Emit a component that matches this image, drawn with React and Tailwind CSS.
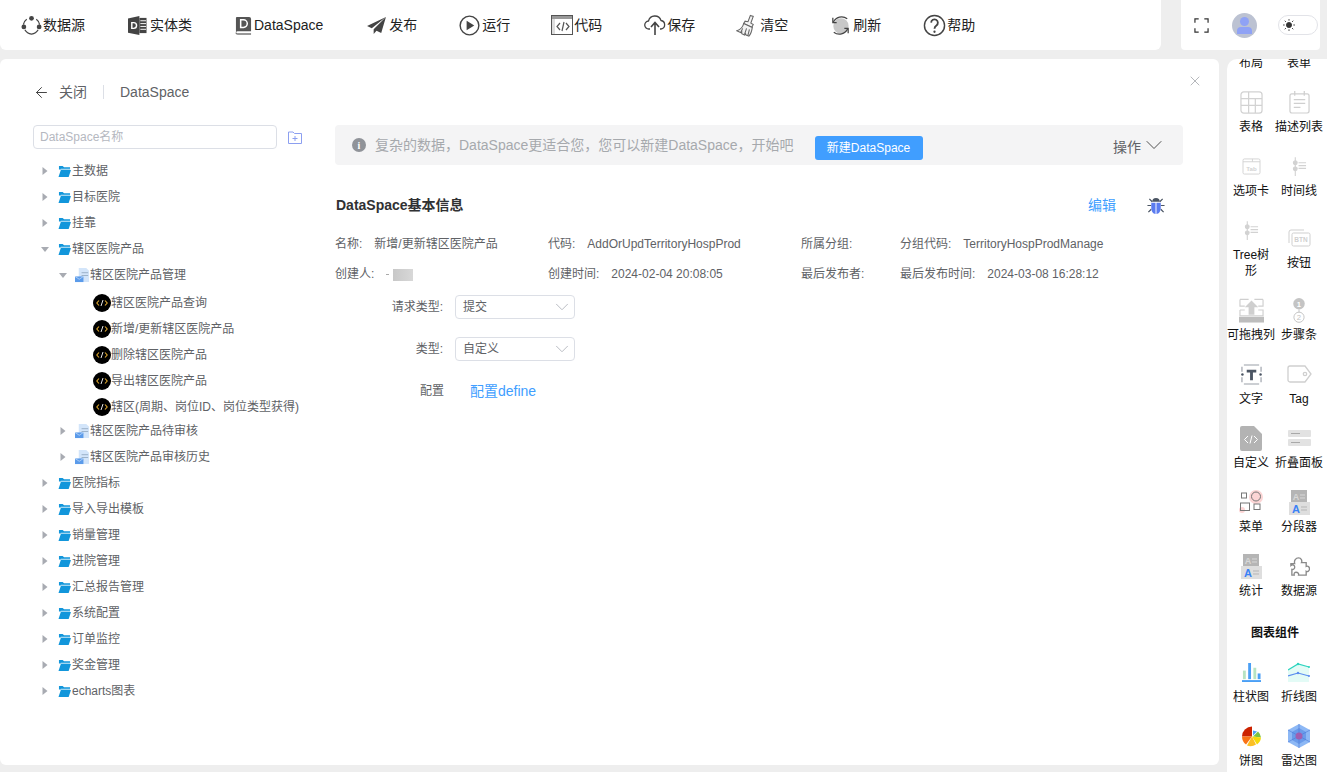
import React from "react";
import { ArrowLeft, X, ChevronDown } from "lucide-react";

const IconSource = () => (
  <svg viewBox="0 0 22 22" className="w-[21px] h-[21px]" fill="none">
    <path d="M6 4.500A8.500 8.500 0 0 0 2.500 10M16 4.500A8.500 8.500 0 0 1 19.500 10M4 15.500A9 9 0 0 0 11 20a9 9 0 0 0 7-4.500" stroke="#444" strokeWidth="1.300" />
    <circle cx="11" cy="3.500" r="2.500" fill="#444" />
    <circle cx="3" cy="12.500" r="2.500" fill="#444" />
    <circle cx="19" cy="12.500" r="2.500" fill="#444" />
  </svg>
);

const IconEntity = () => (
  <svg viewBox="0 0 20 20" className="w-[19px] h-[19px]">
    <path d="M0 2.500 12 0v20L0 17.500z" fill="#444" />
    <path d="M12 2h7.500v16H12z" fill="#444" />
    <path d="M13 5h6M13 8h6M13 11h6M13 14h6" stroke="#fff" strokeWidth="1" />
    <path d="M4 7h2a3 3 0 0 1 0 6H4z" fill="none" stroke="#fff" strokeWidth="1.500" />
  </svg>
);

const IconDataSpace = () => (
  <svg viewBox="0 0 18 20" className="w-[17px] h-[19px]" fill="none">
    <path d="M2 1h13a2 2 0 0 1 2 2v13H3a2 2 0 0 0-2 1.500V2a1 1 0 0 1 1-1z" fill="#555" />
    <path d="M1 17.500A2 2 0 0 0 3 19h14" stroke="#777" strokeWidth="1.500" />
    <path d="M6 4h3a4 4 0 0 1 0 8H6z" stroke="#fff" strokeWidth="1.600" />
  </svg>
);

const IconSend = () => (
  <svg viewBox="0 0 20 18" className="w-[19px] h-[17px]">
    <path d="M20 0 0 9.500l5 2.500zM20 0 7 13v5l3-3.500 5 2.500z" fill="#444" />
  </svg>
);

const IconRun = () => (
  <svg viewBox="0 0 22 22" className="w-[21px] h-[21px]" fill="none">
    <circle cx="11" cy="11" r="9.800" stroke="#444" strokeWidth="1.500" />
    <path d="M8 6l8 5-8 5z" fill="#444" />
  </svg>
);

const IconCode = () => (
  <svg viewBox="0 0 22 20" className="w-[22px] h-[20px]" fill="none">
    <rect x="0.500" y="0.500" width="21" height="19" stroke="#555" fill="#fff" />
    <path d="M1 1h20v3H1z" fill="#999" />
    <path d="M1 4h3v15H1z" fill="#ddd" />
    <path d="M9 8l-3 3.500 3 3.500M15 8l3 3.500-3 3.500M13 7l-2 9" stroke="#555" strokeWidth="1.200" />
  </svg>
);

const IconSave = () => (
  <svg viewBox="0 0 22 22" className="w-[22px] h-[22px]" fill="none" stroke="#444" strokeWidth="1.300">
    <path d="M6 15H5a4 4 0 0 1-.5-8A6.500 6.500 0 0 1 17 6.500a4.300 4.300 0 0 1 0 8.500h-1" />
    <path d="M11 21V9M7 13l4-4.500 4 4.500" strokeWidth="1.600" />
  </svg>
);

const IconBroom = () => (
  <svg viewBox="0 0 24 24" className="w-[23px] h-[23px]" fill="#f3f3f3" stroke="#666" strokeWidth="1.100">
    <path d="M15 1.500l3 1-2.500 7 2.500 1.500-1.500 3L8 10l1.500-2.500 3 .5z" />
    <path d="M8 10c-1 4-3 6-7 7.500l4 2 1-1 0 2 3 1.500 1-1.500.5 1.500 3 1c2-2 3-5 3.500-9z" />
    <path d="M7 15l-2 4M11 15l-2 6M14 16l-1.500 6" />
  </svg>
);

const IconRefresh = () => (
  <svg viewBox="0 0 24 24" className="w-[23px] h-[23px]" fill="none" stroke="#444" strokeWidth="1.300">
    <circle cx="12.500" cy="12.500" r="8" fill="#c8c8c8" stroke="none" />
    <path d="M4 4v5h4M20 20v-5h-4" />
    <path d="M4.500 8.500A9.500 9.500 0 0 1 19 5M19.500 15.500A9.500 9.500 0 0 1 5 19" />
  </svg>
);

const IconHelp = () => (
  <svg viewBox="0 0 24 24" className="w-[23px] h-[23px]" fill="none" stroke="#444" strokeWidth="1.500">
    <circle cx="12" cy="12" r="10.500" />
    <path d="M8.500 9a3.500 3.500 0 1 1 5.500 3c-1.500 1-2 1.500-2 3.500" strokeWidth="1.900" />
    <circle cx="12" cy="18.500" r="1.200" fill="#444" stroke="none" />
  </svg>
);

const FolderIcon = () => (
  <svg viewBox="0 0 14 13" className="w-[13px] h-[12px] shrink-0">
    <path d="M1 1h4l1.500 1.500H13V5H1z" fill="#1296db" />
    <path d="M3 5.500h11L11.500 13H0.500z" fill="#1296db" />
    <path d="M3 4.500h10" stroke="#bfe4f8" strokeWidth="0.800" />
  </svg>
);

const DocIcon = () => (
  <svg viewBox="0 0 16 16" className="w-[15px] h-[15px] shrink-0">
    <path d="M4 0h8l3 3v12H4z" fill="#d3e5fa" />
    <path d="M7 5h7M7 8h7" stroke="#8aa0b8" strokeWidth="0.800" />
    <rect x="0" y="9" width="9" height="6" fill="#5b9bea" />
    <path d="M0 9l4.500 3L9 9" stroke="#d3e5fa" strokeWidth="0.700" fill="none" />
  </svg>
);

const CodeIcon = () => (
  <svg viewBox="0 0 18 18" className="w-[18px] h-[18px] shrink-0" fill="none">
    <circle cx="9" cy="9" r="9" fill="#000" />
    <path d="M6 6.500 3.800 9 6 11.500M12 6.500 14.200 9 12 11.500" stroke="#e0a92e" strokeWidth="1.100" />
    <path d="M10 6 8 12" stroke="#fff" strokeWidth="0.900" />
  </svg>
);

const Caret = ({ open }) => (
  <svg viewBox="0 0 8 8" className="w-[8px] h-[8px] shrink-0">
    {open ? <path d="M0 2h8L4 7z" fill="#a8abb2" /> : <path d="M1.500 0v8L6.500 4z" fill="#a8abb2" />}
  </svg>
);

const toolbarItems = [
  { label: "数据源", w: "w-[23px]", icon: <IconSource /> },
  { label: "实体类", w: "w-[25px]", icon: <IconEntity /> },
  { label: "DataSpace", w: "w-[22px]", icon: <IconDataSpace /> },
  { label: "发布", w: "w-[26px]", icon: <IconSend /> },
  { label: "运行", w: "w-[25px]", icon: <IconRun /> },
  { label: "代码", w: "w-[24px]", icon: <IconCode /> },
  { label: "保存", w: "w-[25px]", icon: <IconSave /> },
  { label: "清空", w: "w-[25px]", icon: <IconBroom /> },
  { label: "刷新", w: "w-[25px]", icon: <IconRefresh /> },
  { label: "帮助", w: "w-[26px]", icon: <IconHelp /> },
];

const treeRows = [
  { level: 0, label: "主数据" },
  { level: 0, label: "目标医院" },
  { level: 0, label: "挂靠" },
  { level: 0, label: "辖区医院产品", open: true },
  { level: 1, label: "辖区医院产品管理", open: true },
  { level: 2, label: "辖区医院产品查询" },
  { level: 2, label: "新增/更新辖区医院产品" },
  { level: 2, label: "删除辖区医院产品" },
  { level: 2, label: "导出辖区医院产品" },
  { level: 2, label: "辖区(周期、岗位ID、岗位类型获得)" },
  { level: 1, label: "辖区医院产品待审核" },
  { level: 1, label: "辖区医院产品审核历史" },
  { level: 0, label: "医院指标" },
  { level: 0, label: "导入导出模板" },
  { level: 0, label: "销量管理" },
  { level: 0, label: "进院管理" },
  { level: 0, label: "汇总报告管理" },
  { level: 0, label: "系统配置" },
  { level: 0, label: "订单监控" },
  { level: 0, label: "奖金管理" },
  { level: 0, label: "echarts图表" },
];

const TreeRow = ({ row }) => {
  if (row.level === 2) {
    return (
      <div className="flex items-center h-[26px] pl-[93px] pt-[4px]">
        <CodeIcon />
        <span className="whitespace-nowrap">{row.label}</span>
      </div>
    );
  }
  if (row.level === 1) {
    return (
      <div className="flex items-center h-[26px] pl-[59px]">
        <Caret open={row.open} />
        <span className="ml-[8px]"><DocIcon /></span>
        <span className="whitespace-nowrap">{row.label}</span>
      </div>
    );
  }
  return (
    <div className="flex items-center h-[26px] pl-[41px]">
      <Caret open={row.open} />
      <span className="ml-[9px] mr-px"><FolderIcon /></span>
      <span className="whitespace-nowrap">{row.label}</span>
    </div>
  );
};

const TableIcon = () => (
  <svg viewBox="0 0 24 24" className="w-[23px] h-[23px]" fill="none" stroke="#d2d2d2" strokeWidth="1.300">
    <rect x="1" y="1" width="22" height="22" rx="3" />
    <path d="M1 8h22M1 15h22M9 1v22M16 8v15" />
  </svg>
);
const ListIcon = () => (
  <svg viewBox="0 0 22 24" className="w-[21px] h-[23px]" fill="none" stroke="#cfcfcf" strokeWidth="1.300">
    <rect x="1" y="3" width="20" height="20" rx="2" />
    <path d="M6 0v5M16 0v5M5 9h12M5 13h12M5 17h7" />
  </svg>
);
const TabIcon = () => (
  <svg viewBox="0 0 20 18" className="w-[19px] h-[17px]" fill="none" stroke="#d2d2d2">
    <rect x="1" y="1" width="18" height="16" rx="1.500" />
    <path d="M1 4h18M11 1v3" />
    <text x="10" y="13.500" fontSize="6.500" fontWeight="700" textAnchor="middle" fill="#d2d2d2" stroke="none">Tab</text>
  </svg>
);
const TimelineIcon = () => (
  <svg viewBox="0 0 16 20" className="w-[15px] h-[19px]" fill="none" stroke="#d2d2d2" strokeWidth="1.200">
    <path d="M3.500 0v20M7 6h8M7 9h8M7 12h8" />
    <circle cx="3.500" cy="6" r="2" fill="#d2d2d2" />
    <circle cx="3.500" cy="12.500" r="2" fill="#d2d2d2" />
  </svg>
);
const ButtonIcon = () => (
  <svg viewBox="0 0 23 18" className="w-[23px] h-[18px]" fill="none" stroke="#cfcfcf">
    <path d="M1 14V3a2 2 0 0 1 2-2h13" />
    <rect x="4" y="4" width="18" height="13" rx="1.500" />
    <text x="13" y="13" fontSize="6.500" fontWeight="700" textAnchor="middle" fill="#cfcfcf" stroke="none">BTN</text>
  </svg>
);
const DragIcon = () => (
  <svg viewBox="0 0 26 25" className="w-[25px] h-[25px]" fill="none">
    <path d="M1 1h9M16 1h9M1 1v7h5M25 1v7h-5M1 12v6h24v-6h-5M6 12H1" stroke="#cfcfcf" strokeWidth="1.200" />
    <path d="M13 2l7 7h-4v8h-6V9H6z" fill="#cfcfcf" />
    <rect x="0" y="19" width="26" height="6" fill="#bdbdbd" />
  </svg>
);
const StepsIcon = () => (
  <svg viewBox="0 0 14 26" className="w-[14px] h-[25px]">
    <circle cx="7" cy="6" r="6" fill="#c4c4c4" />
    <text x="7" y="9" fontSize="8" fontWeight="700" textAnchor="middle" fill="#fff">1</text>
    <path d="M7 12v3" stroke="#c4c4c4" />
    <circle cx="7" cy="20" r="5.300" fill="none" stroke="#c4c4c4" />
    <text x="7" y="23" fontSize="8" textAnchor="middle" fill="#c4c4c4">2</text>
  </svg>
);
const TextIcon = () => (
  <svg viewBox="0 0 22 22" className="w-[21px] h-[21px]" fill="none">
    <path d="M3 1h16M3 21h16M1 3v5M1 14v5M21 3v5M21 14v5" stroke="#9a9fa8" strokeWidth="1.200" />
    <circle cx="1.500" cy="11" r="1.300" fill="#4b5563" />
    <circle cx="20.500" cy="11" r="1.300" fill="#4b5563" />
    <path d="M6 6h10v3h-3.500v8h-3V9H6z" fill="#4b5563" />
  </svg>
);
const TagIcon = () => (
  <svg viewBox="0 0 25 18" className="w-[25px] h-[18px]" fill="none" stroke="#cfcfcf" strokeWidth="1.300">
    <path d="M3 1h15l6 8-6 8H3a2 2 0 0 1-2-2V3a2 2 0 0 1 2-2z" />
    <circle cx="18" cy="9" r="1.700" />
  </svg>
);
const CustomIcon = () => (
  <svg viewBox="0 0 22 25" className="w-[22px] h-[25px]" fill="none">
    <path d="M2 0h12l8 8v15a2 2 0 0 1-2 2H2a2 2 0 0 1-2-2V2a2 2 0 0 1 2-2z" fill="#b3b3b3" />
    <path d="M8 10l-3.500 3.500L8 17M14 10l3.500 3.500L14 17M12 9.500l-2 8" stroke="#fff" strokeWidth="1" />
  </svg>
);
const CollapseIcon = () => (
  <svg viewBox="0 0 23 16" className="w-[23px] h-[16px]">
    <rect x="0" y="0" width="23" height="7" rx="1" fill="#e2e2e2" />
    <rect x="0" y="9" width="23" height="7" rx="1" fill="#e2e2e2" />
    <path d="M3 3.500h9M3 12.500h9" stroke="#a8a8a8" />
  </svg>
);
const MenuIcon = () => (
  <svg viewBox="0 0 25 24" className="w-[25px] h-[24px]" fill="none" stroke="#777" strokeWidth="1">
    <circle cx="17" cy="7" r="7" fill="#fcd5d5" stroke="none" />
    <circle cx="3" cy="20" r="3" fill="#fcd5d5" stroke="none" />
    <circle cx="17" cy="6.500" r="4.500" />
    <rect x="2.500" y="3" width="5" height="5" />
    <rect x="1.500" y="13" width="9" height="7.500" />
    <rect x="15" y="14" width="6" height="5.500" />
  </svg>
);
const StatIcon = () => (
  <svg viewBox="0 0 21 25" className="w-[21px] h-[25px]">
    <rect x="2" y="0" width="16" height="14" fill="#b5b5b5" />
    <text x="7" y="10" fontSize="9" fontWeight="700" textAnchor="middle" fill="#d8d8d8">A</text>
    <path d="M11 5h5M11 8h5" stroke="#d8d8d8" />
    <rect x="0" y="12" width="21" height="13" fill="#dedede" />
    <text x="7" y="22.500" fontSize="11" fontWeight="700" textAnchor="middle" fill="#3b82f6">A</text>
    <path d="M12 17h6M12 20h6" stroke="#b5b5b5" />
  </svg>
);
const PuzzleIcon = () => (
  <svg viewBox="0 0 22 22" className="w-[21px] h-[21px]" fill="none" stroke="#8a8a8a" strokeWidth="1.400">
    <path d="M2 8h4c-1-3 1-6 4-6s4 3 3 5h5v4c2-1 3.500.5 3.500 2.500S19.500 17 18 16v4H10c.5-2-1-3-2.500-3S5 18 5.500 20H3v-6c1.500.5 3-.5 3-2.500S4 8.500 2 10z" />
  </svg>
);
const BarIcon = () => (
  <svg viewBox="0 0 20 20" className="w-[19px] h-[19px]">
    <rect x="1" y="8" width="3" height="9" fill="#b7e3c2" />
    <rect x="6.500" y="0" width="3" height="17" fill="#4a9ff5" />
    <rect x="12" y="5" width="3" height="12" fill="#b7e3c2" />
    <rect x="16.500" y="11" width="3" height="6" fill="#4a9ff5" />
    <rect x="0" y="18" width="20" height="2" fill="#4a9ff5" />
  </svg>
);
const LineIcon = () => (
  <svg viewBox="0 0 22 20" className="w-[22px] h-[20px]" fill="none">
    <path d="M0 8l10-6 11 3v15H0z" fill="#e3fbf6" />
    <path d="M0 8l10-6 11 3" stroke="#2dd4bf" strokeWidth="1.200" />
    <path d="M0 14l10-3 11 3" stroke="#5b8def" strokeWidth="1.200" />
    <circle cx="10" cy="2" r="1.200" fill="#2dd4bf" />
    <circle cx="21" cy="5" r="1" fill="#2dd4bf" />
    <circle cx="10" cy="11" r="1.200" fill="#5b8def" />
    <circle cx="21" cy="14" r="1" fill="#5b8def" />
  </svg>
);
const PieIcon = () => (
  <svg viewBox="0 0 20 20" className="w-[20px] h-[21px]">
    <path d="M11 10V0a10 10 0 0 0-10 10z" fill="#cc2200" />
    <path d="M12 9V4l4 1z" fill="#4a9ff5" />
    <path d="M12 10l5-5a10 10 0 0 1 3 6z" fill="#7cc242" />
    <path d="M11 10l9 1a10 10 0 0 1-4 7z" fill="#f5d90a" />
    <path d="M11 10l4 8a10 10 0 0 1-9 1z" fill="#fbbf24" />
    <path d="M11 10H1a10 10 0 0 0 4 8z" fill="#f97316" />
  </svg>
);
const RadarIcon = () => (
  <svg viewBox="0 0 22 24" className="w-[22px] h-[24px]" fill="none">
    <path d="M11 0l11 6v12l-11 6L0 18V6z" fill="#8db8f5" />
    <path d="M11 4l7 4v8l-7 4-7-4V8z" fill="#6a9bea" />
    <path d="M11 0v24M0 6l22 12M22 6L0 18" stroke="#4a7bd6" strokeWidth="0.600" />
    <circle cx="11" cy="12" r="3.500" fill="#a05fb0" />
  </svg>
);

const paletteRows = [
  { label: "布局" },
  { label: "表单" },
  { label: "表格", icon: <TableIcon /> },
  { label: "描述列表", icon: <ListIcon /> },
  { label: "选项卡", icon: <TabIcon /> },
  { label: "时间线", icon: <TimelineIcon /> },
  { label: "Tree树形", icon: <TimelineIcon /> },
  { label: "按钮", icon: <ButtonIcon /> },
  { label: "可拖拽列", icon: <DragIcon /> },
  { label: "步骤条", icon: <StepsIcon /> },
  { label: "文字", icon: <TextIcon /> },
  { label: "Tag", icon: <TagIcon /> },
  { label: "自定义", icon: <CustomIcon /> },
  { label: "折叠面板", icon: <CollapseIcon /> },
  { label: "菜单", icon: <MenuIcon /> },
  { label: "分段器", icon: <StatIcon /> },
  { label: "统计", icon: <StatIcon /> },
  { label: "数据源", icon: <PuzzleIcon /> },
];

const chartRows = [
  { label: "柱状图", icon: <BarIcon /> },
  { label: "折线图", icon: <LineIcon /> },
  { label: "饼图", icon: <PieIcon /> },
  { label: "雷达图", icon: <RadarIcon /> },
];

const PaletteItem = ({ item }) => (
  <div className="flex flex-col items-center text-center">
    <div className="h-[30px] flex items-center justify-center">{item.icon}</div>
    <span className="mt-[2px] leading-[16px] w-[48px]">{item.label}</span>
  </div>
);

const SelectBox = ({ value }) => (
  <div className="w-[120px] h-[24px] border border-[#dcdfe6] rounded-[4px] flex items-center justify-between pl-[7px] pr-[1px] text-[#606266]">
    <span>{value}</span>
    <ChevronDown className="w-[22px] h-[22px] text-[#b4b7bd]" strokeWidth={1} />
  </div>
);

const Info = ({ label, value, children }) => (
  <div className="flex gap-[12px] whitespace-nowrap">
    <span>{label}</span>
    {value ? <span>{value}</span> : children}
  </div>
);

const App = () => {
  return (
    <div className="w-[1327px] h-[772px] overflow-hidden bg-[#eeeeee] text-[#000] [font-family:'Liberation_Sans','Noto_Sans_CJK_SC',sans-serif]">
      <div className="flex h-[50px]">
        <div className="w-[1161px] bg-white rounded-b-[6px] flex items-center pl-[20px] gap-[40px] text-[14px] text-[#222]">
          {toolbarItems.map((item) => (
            <div key={item.label} className="flex items-center">
              <span className={`${item.w} flex items-center justify-center`}>{item.icon}</span>
              <span>{item.label}</span>
            </div>
          ))}
        </div>
        <div className="ml-[20px] w-[139px] bg-white rounded-b-[4px] flex items-center pl-[13px]">
          <svg viewBox="0 0 16 16" className="w-[15px] h-[15px]" fill="none" stroke="#333" strokeWidth="1.300">
            <path d="M1 5V1h4M11 1h4v4M15 11v4h-4M5 15H1v-4" />
          </svg>
          <div className="ml-[23px] w-[25px] h-[25px] rounded-full bg-[#bcc2d2] flex flex-col items-center justify-center overflow-hidden">
            <span className="w-[9px] h-[9px] rounded-full bg-[#8fa2f5]" />
            <span className="mt-px w-[15px] h-[7px] rounded-t-[4px] bg-[#8fa2f5]" />
          </div>
          <div className="ml-[21px] w-[40px] h-[20px] rounded-full border border-[#e2e3e8] bg-white flex items-center pl-[4px]">
            <svg viewBox="0 0 14 14" className="w-[12px] h-[12px]" fill="none" stroke="#333" strokeWidth="1">
              <circle cx="7" cy="7" r="3" fill="#333" />
              <path d="M7 0v2M7 12v2M0 7h2M12 7h2M2 2l1.500 1.500M10.500 10.500 12 12M12 2l-1.500 1.500M3.500 10.500 2 12" />
            </svg>
          </div>
        </div>
      </div>

      <div className="flex mt-[9px]">
        <div className="relative w-[1219px] h-[706px] bg-white rounded-[6px] text-[12px] text-[#606266]">
          <X className="absolute top-[14px] right-[16px] w-[16px] h-[16px] text-[#909399]" strokeWidth={1} />
          <div className="flex items-center h-[66px] pl-[33px] text-[14px]">
            <ArrowLeft className="w-[17px] h-[17px] text-[#444]" strokeWidth={1.400} />
            <span className="ml-[9px]">关闭</span>
            <span className="ml-[16px] w-px h-[14px] bg-[#dcdfe6]" />
            <span className="ml-[16px]">DataSpace</span>
          </div>

          <div className="flex">
            <div className="w-[335px] shrink-0">
              <div className="flex items-center pl-[33px]">
                <div className="w-[244px] h-[24px] border border-[#dcdfe6] rounded-[4px] flex items-center pl-[6px] text-[#b5b8bf]">
                  DataSpace名称
                </div>
                <svg viewBox="0 0 14 13" className="ml-[11px] w-[14px] h-[13px]" fill="none" stroke="#8c9ff0" strokeWidth="1">
                  <path d="M0.500 12.500V1h4.500l1.500 1.500h7v10z" />
                  <path d="M7 5v5M4.500 7.500h5" />
                </svg>
              </div>
              <div className="mt-[9px]">
                {treeRows.map((row) => (
                  <TreeRow key={row.label} row={row} />
                ))}
              </div>
            </div>

            <div className="w-[848px]">
              <div className="h-[40px] bg-[#f4f4f5] rounded-[4px] flex items-center pl-[17px] pr-[22px]">
                <span className="w-[14px] h-[14px] rounded-full bg-[#909399] text-white text-[10px] font-bold flex items-center justify-center [font-family:'Liberation_Serif',serif]">i</span>
                <span className="ml-[9px] text-[14px] text-[#a6a9ad] whitespace-nowrap">复杂的数据，DataSpace更适合您，您可以新建DataSpace，开始吧</span>
                <span className="ml-[21px] mt-[6px] w-[108px] h-[24px] bg-[#409eff] rounded-[3px] text-white flex items-center justify-center">新建DataSpace</span>
                <span className="ml-auto mt-[4px] text-[14px] flex items-center">
                  操作
                  <ChevronDown className="-ml-px -mt-[4px] -mr-[7px] w-[28px] h-[28px] text-[#444]" strokeWidth={0.800} />
                </span>
              </div>

              <div className="mt-[30px] flex items-center h-[20px] pl-px pr-[18px]">
                <span className="text-[14px] font-bold text-[#303133]">DataSpace基本信息</span>
                <span className="ml-auto text-[14px] text-[#409eff]">编辑</span>
                <svg viewBox="0 0 18 20" className="ml-[31px] w-[18px] h-[19px]">
                  <path d="M2 3l3 3M16 3l-3 3M0 10h4M14 10h4M1 17l3-3M17 17l-3-3" stroke="#4b5563" strokeWidth="1.300" />
                  <path d="M5 6a4 4 0 0 1 8 0z" fill="#4b5563" />
                  <path d="M4 7h4.500v12C6 19 4 16 4 13zM14 7H9.500v12c2.500 0 4.500-3 4.500-6z" fill="#5b7cf0" />
                </svg>
              </div>

              <div className="mt-[22px] grid grid-cols-[213px_253px_99px_1fr] gap-y-[15px] leading-[15px]">
                <Info label="名称:" value="新增/更新辖区医院产品" />
                <Info label="代码:" value="AddOrUpdTerritoryHospProd" />
                <Info label="所属分组:" />
                <Info label="分组代码:" value="TerritoryHospProdManage" />
                <Info label="创建人:">
                  <span className="flex items-center gap-[4px]">
                    <span className="w-[3px] h-px bg-[#aaa]" />
                    <span className="w-[20px] h-[12px] bg-gradient-to-r from-[#c8c8c8] to-[#d8d8d8]" />
                  </span>
                </Info>
                <Info label="创建时间:" value="2024-02-04 20:08:05" />
                <Info label="最后发布者:" />
                <Info label="最后发布时间:" value="2024-03-08 16:28:12" />
              </div>

              <div className="mt-[13px] flex flex-col gap-[18px]">
                <div className="flex items-center">
                  <span className="w-[108px] text-right">请求类型:</span>
                  <span className="ml-[12px]"><SelectBox value="提交" /></span>
                </div>
                <div className="flex items-center">
                  <span className="w-[108px] text-right">类型:</span>
                  <span className="ml-[12px]"><SelectBox value="自定义" /></span>
                </div>
                <div className="flex items-center h-[24px]">
                  <span className="w-[109px] text-right">配置</span>
                  <span className="ml-[26px] text-[14px] text-[#409eff]">配置define</span>
                </div>
              </div>
            </div>
          </div>
        </div>

        <div className="ml-[8px] w-[100px] h-[720px] bg-white rounded-tl-[10px] overflow-hidden text-[12px] text-[#111]">
          <div className="-mt-[36px]">
            <div className="grid grid-cols-[48px_48px] gap-y-[16px] items-center">
              {paletteRows.map((item) => (
                <PaletteItem key={item.label} item={item} />
              ))}
            </div>
            <div className="w-[96px] mt-[24px] mb-[14px] h-[20px] flex items-center justify-center font-bold">图表组件</div>
            <div className="grid grid-cols-[48px_48px] gap-y-[16px] items-center">
              {chartRows.map((item) => (
                <PaletteItem key={item.label} item={item} />
              ))}
            </div>
          </div>
        </div>
      </div>
    </div>
  );
};

export default App;
